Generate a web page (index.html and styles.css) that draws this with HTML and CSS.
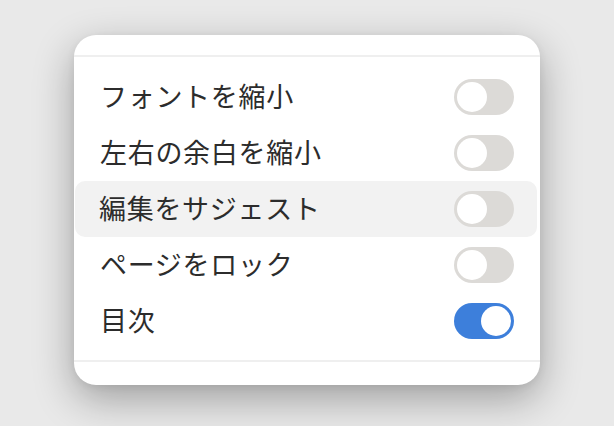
FILE: index.html
```html
<!DOCTYPE html>
<html lang="ja">
<head>
<meta charset="utf-8">
<link rel="stylesheet" href="styles.css">
</head>
<body>
<div class="stage">
  <div class="card">
    <div class="sep"></div>
    <ul class="list">
      <li class="row"><span class="label">フォントを縮小</span><span class="toggle"><span class="knob"></span></span></li>
      <li class="row"><span class="label">左右の余白を縮小</span><span class="toggle"><span class="knob"></span></span></li>
      <li class="row hover"><span class="label">編集をサジェスト</span><span class="toggle"><span class="knob"></span></span></li>
      <li class="row"><span class="label">ページをロック</span><span class="toggle"><span class="knob"></span></span></li>
      <li class="row"><span class="label">目次</span><span class="toggle on"><span class="knob"></span></span></li>
    </ul>
    <div class="sep"></div>
  </div>
</div>
</body>
</html>
```
FILE: styles.css
```css
html, body {
  margin: 0;
  padding: 0;
}
body {
  width: 614px;
  height: 426px;
  background: #e9e9e9;
  overflow: hidden;
  font-family: "Noto Sans CJK JP", "Noto Sans", sans-serif;
}
.stage {
  padding: 35px 0 0 74px;
}
.card {
  width: 466px;
  height: 350px;
  box-sizing: border-box;
  background: #fff;
  border-radius: 22px;
  box-shadow: 0 14px 40px rgba(0, 0, 0, 0.32), 0 2px 8px rgba(0, 0, 0, 0.06);
  padding-top: 20px;
}
.sep {
  height: 2px;
  background: #efefef;
}
.list {
  list-style: none;
  margin: 12px 0 11px;
  padding: 0;
}
.row {
  height: 56px;
  display: flex;
  align-items: center;
  justify-content: space-between;
  padding: 0 26px 0 25px;
  margin: 0 0 0 1px;
  border-radius: 10px;
}
.row.hover {
  background: #f2f2f2;
  margin: 0 3px 0 1px;
  padding: 0 23px 0 24px;
}
.label {
  font-size: 27px;
  letter-spacing: 0.7px;
  color: #2c2c2c;
  line-height: 1;
  padding-bottom: 3px;
}
.toggle {
  width: 60px;
  height: 36px;
  box-sizing: border-box;
  border-radius: 18px;
  background: #dcdad7;
  padding: 3px;
  display: flex;
}
.knob {
  width: 30px;
  height: 30px;
  border-radius: 50%;
  background: #fff;
}
.toggle.on {
  background: #3d7fdb;
  justify-content: flex-end;
}
```
